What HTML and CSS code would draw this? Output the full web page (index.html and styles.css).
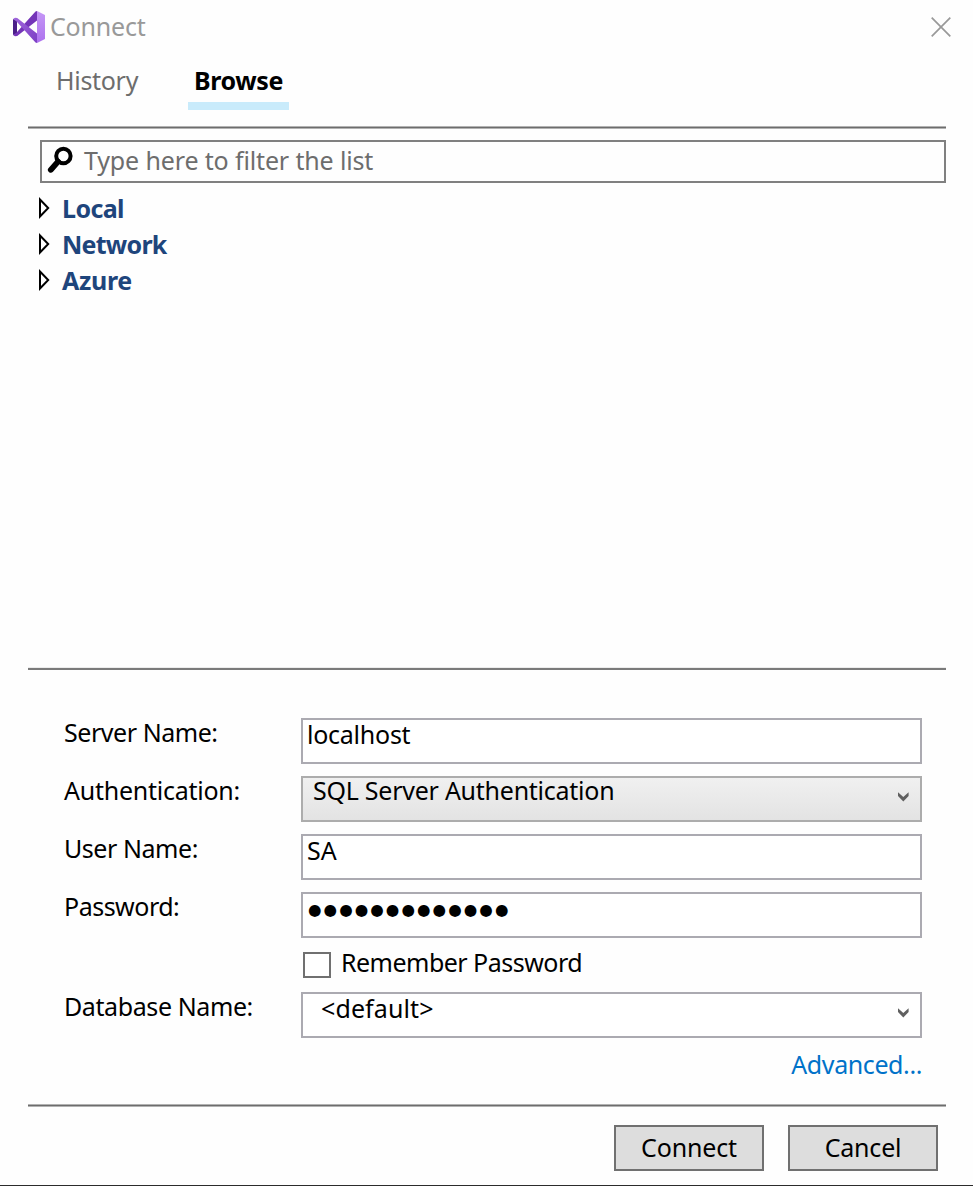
FILE: index.html
```html
<!DOCTYPE html>
<html lang="en">
<head>
<meta charset="utf-8">
<title>Connect</title>
<link rel="stylesheet" href="styles.css">
</head>
<body>
<div class="dialog">
  <header class="titlebar">
    <svg class="logo" width="32" height="32" viewBox="0 0 32 32">
      <defs>
        <linearGradient id="band" x1="0" y1="0" x2="1" y2="1"><stop offset="0" stop-color="#a066dc"/><stop offset="1" stop-color="#7c3fc4"/></linearGradient>
        <linearGradient id="side" x1="0" y1="0" x2="0" y2="1"><stop offset="0" stop-color="#c597f6"/><stop offset="1" stop-color="#ad72ee"/></linearGradient>
      </defs>
      <path d="M0 8 4 9.5V22.5L0 24Z" fill="#4b1f88"/>
      <path d="M0 24 2 25.3 4.2 25 24 9.5V0L22.5.5 3.6 21.4Z" fill="#7434b8"/>
      <path d="M0 8 2 6.7 4.2 7 24 22.5V32L22.5 31.5 3.6 10.6Z" fill="url(#band)"/>
      <path d="M24 0 32 4V28L24 32Z" fill="url(#side)"/>
    </svg>
    <span class="title">Connect</span>
    <svg class="close" width="20" height="20" viewBox="0 0 20 20"><path d="M.7.7 19.3 19.3M19.3.7.7 19.3" stroke="#999" stroke-width="1.7"/></svg>
  </header>
  <nav class="tabs">
    <div class="tab"><span class="t-history">History</span></div>
    <div class="tab active"><span class="t-browse">Browse</span></div>
  </nav>
  <div class="rule"></div>
  <section class="browser">
    <div class="search">
      <svg width="28" height="28" viewBox="0 0 28 28"><circle cx="17.4" cy="10" r="7.2" fill="none" stroke="#000" stroke-width="4"/><path d="M12 15.6 4.8 23.8" stroke="#000" stroke-width="5.8" stroke-linecap="round"/></svg>
      <span class="t-filter">Type here to filter the list</span>
    </div>
    <ul class="tree">
      <li><svg class="arrow" width="11" height="22" viewBox="0 0 11 22"><path d="M1 2.5V19.5L9.2 11Z" fill="#fff" stroke="#000" stroke-width="2"/></svg><span class="t-local">Local</span></li>
      <li><svg class="arrow" width="11" height="22" viewBox="0 0 11 22"><path d="M1 2.5V19.5L9.2 11Z" fill="#fff" stroke="#000" stroke-width="2"/></svg><span class="t-network">Network</span></li>
      <li><svg class="arrow" width="11" height="22" viewBox="0 0 11 22"><path d="M1 2.5V19.5L9.2 11Z" fill="#fff" stroke="#000" stroke-width="2"/></svg><span class="t-azure">Azure</span></li>
    </ul>
  </section>
  <div class="rule soft"></div>
  <section class="form">
    <div class="row"><label><span class="t-server">Server Name:</span></label><div class="field"><span class="t-localhost">localhost</span></div></div>
    <div class="row"><label><span class="t-auth">Authentication:</span></label><div class="field combo shaded"><span class="t-sql">SQL Server Authentication</span><svg class="chevron" width="11" height="10" viewBox="0 0 11 10"><path d="M0 .3 5.3 5 10.6.3V4L5.3 9.6 0 4Z" fill="#606060"/></svg></div></div>
    <div class="row"><label><span class="t-user">User Name:</span></label><div class="field"><span class="t-sa">SA</span></div></div>
    <div class="row"><label><span class="t-password">Password:</span></label><div class="field"><span class="dots">●●●●●●●●●●●●●</span></div></div>
    <div class="remember"><span class="box"></span><span class="t-remember">Remember Password</span></div>
    <div class="row"><label><span class="t-database">Database Name:</span></label><div class="field combo default"><span class="t-default">&lt;default&gt;</span><svg class="chevron" width="11" height="10" viewBox="0 0 11 10"><path d="M0 .3 5.3 5 10.6.3V4L5.3 9.6 0 4Z" fill="#606060"/></svg></div></div>
    <div class="advanced"><span class="t-advanced">Advanced...</span></div>
  </section>
  <div class="rule"></div>
  <footer class="actions">
    <div class="button"><span class="t-connect">Connect</span></div>
    <div class="button"><span class="t-cancel">Cancel</span></div>
  </footer>
</div>
</body>
</html>
```
FILE: styles.css
```css
* { box-sizing: border-box; }
body { margin: 0; background: #fefefe; }
svg { display: block; flex: none; }
.dialog {
  width: 973px; height: 1186px; display: flex; flex-direction: column;
  border-bottom: 1px solid #2b2b2b;
  font: 25px/28px "Noto Sans", sans-serif; color: #000; white-space: nowrap;
}
.titlebar { height: 62px; flex: none; display: flex; align-items: flex-start; padding: 11px 22px 0 13px; color: #999; }
.title { margin: 1px auto 0 5px; letter-spacing: -.2px; }
.close { margin-top: 6px; }
.tabs { height: 64px; flex: none; display: flex; gap: 43px; padding: 4px 0 0 50px; color: #6d6d6d; }
.tab { height: 44px; width: 95px; padding-left: 6px; }
.tab.active { width: 101px; border-bottom: 8px solid #c9ebfb; color: #000; font-weight: 700; }
.rule { height: 3px; flex: none; margin: 0 27px 0 28px; background: #6d6d6d; border: solid #b2b2b2; border-width: 1px 0; }
.rule.soft { background: #7a7a7a; border-color: #ececec transparent #7a7a7a; }
.browser { height: 538px; flex: none; padding: 11px 27px 0 40px; }
.search { height: 43px; border: 2px solid #808080; display: flex; padding: 4px 0 0 4px; color: #6d6d6d; }
.search span { margin-left: 10px; }
.tree { list-style: none; margin: 11px 0 0; padding: 0; color: #1e457c; font-weight: 700; }
.tree li { display: flex; height: 36px; align-items: flex-start; }
.arrow { margin: 3px 12.5px 0 -1.5px; }
.form { height: 434px; flex: none; display: flex; flex-direction: column; padding: 48px 51px 0 64px; }
.row { display: grid; grid-template-columns: 237px 1fr; height: 46px; flex: none; margin-bottom: 12px; }
.field { border: 2px solid #abaab1; padding-left: 4px; display: flex; background: #fff; }
.combo { justify-content: space-between; padding: 0 11px 0 10px; }
.shaded { line-height: 26px; border-color: #acacac; background: linear-gradient(#f0f0f0, #e3e3e3); }
.shaded span { margin-top: -1px; }
.default { padding-left: 18px; }
.chevron { margin-top: 14px; }
.dots { font: 15.5px/32px "DejaVu Sans", sans-serif; letter-spacing: 2.05px; margin-left: 1px; }
.remember { display: flex; height: 44px; flex: none; margin: -2px 0 0 239px; }
.box { width: 28px; height: 26px; border: 2px solid #707070; margin: 4px 10px 0 0; background: #fff; }
.advanced { color: #0072c9; display: flex; justify-content: flex-end; }
.actions { display: flex; justify-content: flex-end; gap: 24px; padding: 18px 35px 0 0; }
.button { width: 150px; height: 46px; border: 2px solid #707070; background: #ddd; line-height: 41px; text-align: center; }

/* Per-label tracking */
.t-history { letter-spacing: -.3px; }
.t-browse { letter-spacing: -.4px; }
.t-filter { letter-spacing: -.14px; }
.t-local { letter-spacing: -.6px; }
.t-network { letter-spacing: -.75px; }
.t-azure { letter-spacing: -.3px; }
.t-server { letter-spacing: -.45px; }
.t-auth { letter-spacing: -.25px; }
.t-user { letter-spacing: -.45px; }
.t-password { letter-spacing: -.5px; }
.t-database { letter-spacing: -.4px; }
.t-localhost { letter-spacing: -.25px; }
.t-sql { letter-spacing: -.25px; }
.t-remember { letter-spacing: -.52px; }
.t-default { letter-spacing: .1px; }
.t-advanced { letter-spacing: -.4px; }
.t-connect { letter-spacing: -.15px; }
.t-cancel { letter-spacing: -.2px; }
```
